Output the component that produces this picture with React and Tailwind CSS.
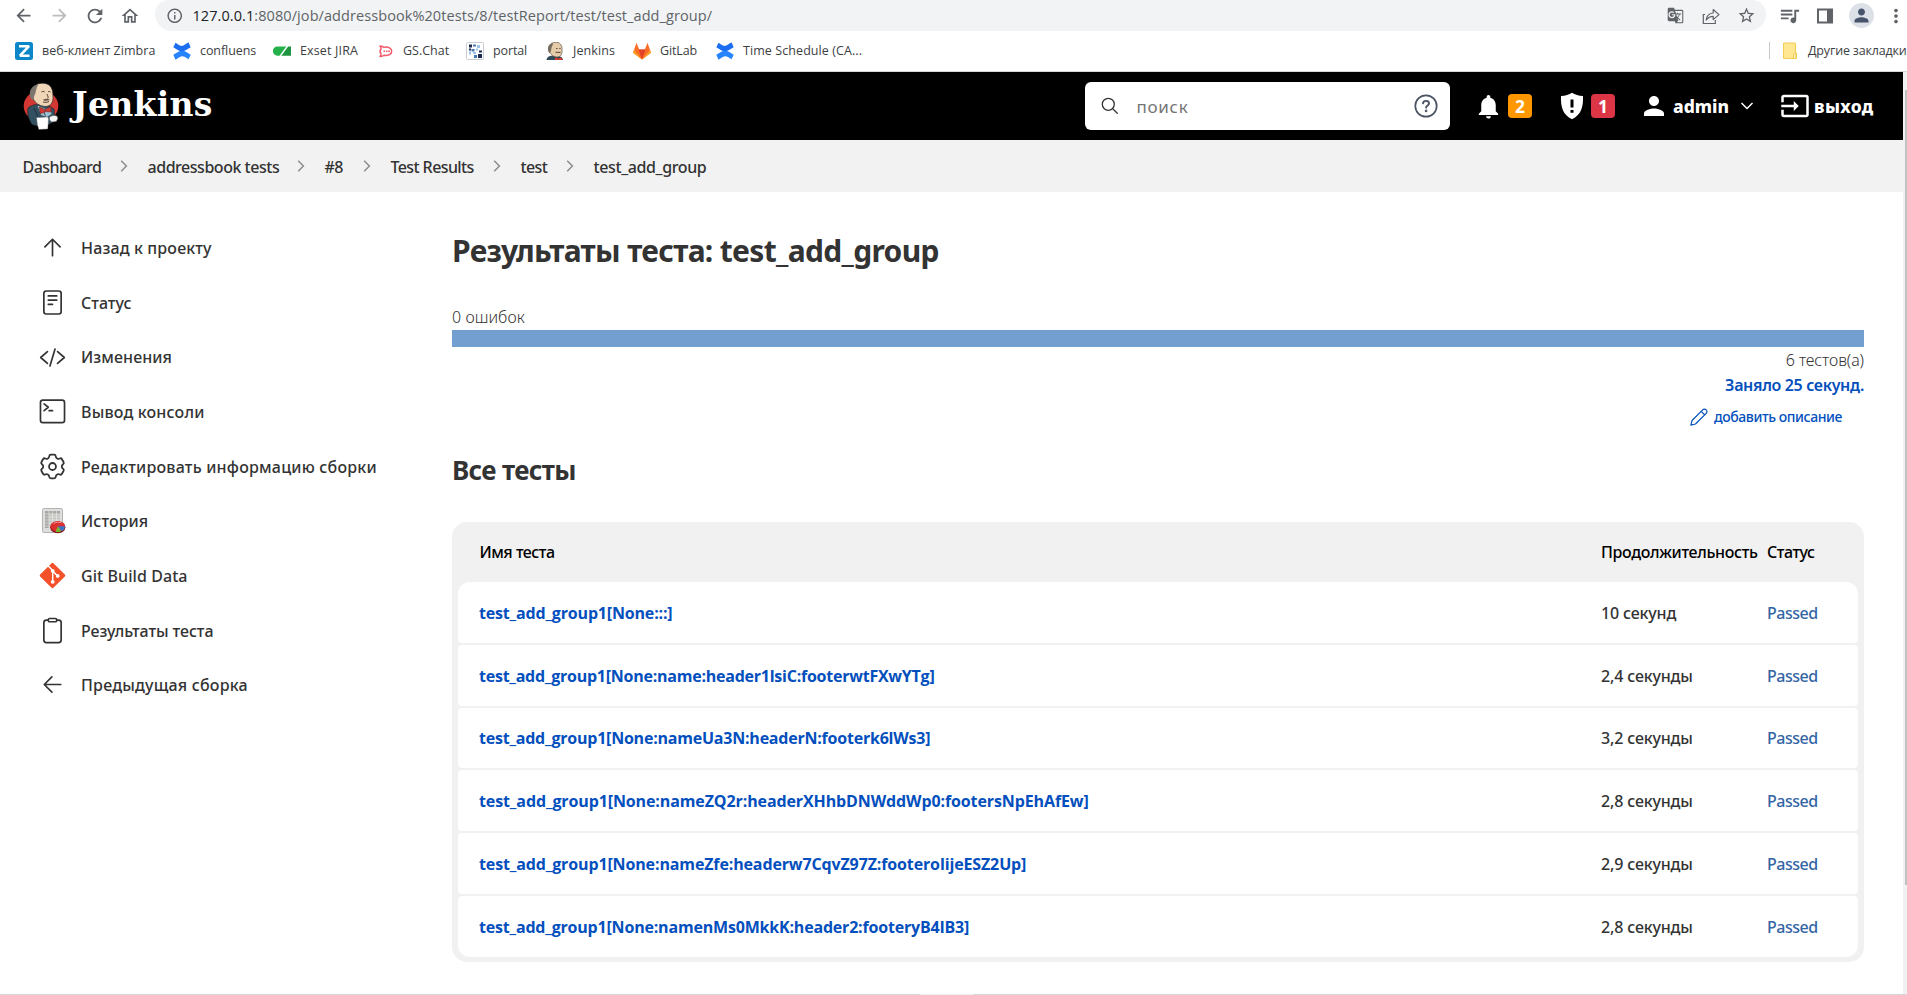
import React from "react";
import {
  MdArrowBack, MdArrowForward, MdRefresh, MdOutlineHome, MdInfoOutline, MdGTranslate,
  MdStarBorder, MdQueueMusic, MdPerson, MdMoreVert, MdNotifications, MdInput,
} from "react-icons/md";

/* ---------- icons ---------- */

function Line({ children, className = "size-[27px]", w = 32 }) {
  return (
    <svg viewBox="0 0 512 512" className={className} fill="none" stroke="currentColor" strokeWidth={w} strokeLinecap="round" strokeLinejoin="round">
      {children}
    </svg>
  );
}

const ArrowUp = () => <Line><path d="M112 244 256 100l144 144M256 120v292" /></Line>;
const ArrowLeft = () => <Line><path d="M244 400 100 256l144-144M120 256h292" /></Line>;
const Reader = () => (
  <Line><rect x="92" y="38" width="328" height="436" rx="46" /><path d="M176 132h160M176 210h160M176 290h80" /></Line>
);
const Code = () => <Line><path d="M160 368 32 256l128-112M352 368l128-112-128-112M304 96l-96 320" /></Line>;
const Terminal = () => (
  <Line><rect x="28" y="40" width="456" height="428" rx="46" /><path d="m96 112 80 64-80 64M192 240h64" /></Line>
);
const Clipboard = () => (
  <Line>
    <path d="M336 58h36a48 48 0 0 1 48 48v332a48 48 0 0 1-48 48H140a48 48 0 0 1-48-48V106a48 48 0 0 1 48-48h36" />
    <rect x="176" y="28" width="160" height="62" rx="26" />
  </Line>
);

const gearPath = (() => {
  const pts = [];
  for (let k = 0; k < 6; k++) {
    for (const [a, r] of [[-21, 178], [-15, 232], [15, 232], [21, 178]]) {
      const t = ((k * 60 + a - 90) * Math.PI) / 180;
      pts.push([256 + r * Math.cos(t), 256 + r * Math.sin(t)]);
    }
  }
  const near = (p, q, d) => {
    const l = Math.hypot(q[0] - p[0], q[1] - p[1]);
    const f = Math.min(0.5, d / l);
    return [p[0] + (q[0] - p[0]) * f, p[1] + (q[1] - p[1]) * f];
  };
  let d = "";
  pts.forEach((p, i) => {
    const prev = pts[(i + pts.length - 1) % pts.length];
    const next = pts[(i + 1) % pts.length];
    const a = near(p, prev, 30);
    const b = near(p, next, 30);
    d += `${i ? "L" : "M"}${a[0]} ${a[1]}Q${p[0]} ${p[1]} ${b[0]} ${b[1]}`;
  });
  return d + "Z";
})();
const Gear = () => <Line w={34}><path d={gearPath} /><circle cx="256" cy="256" r="66" /></Line>;

const History = () => (
  <svg viewBox="0 0 27 27" className="size-[27px]">
    <rect x="3.5" y="1.5" width="20" height="24" rx="1.2" fill="#dededc" stroke="#b4b4b2" />
    <rect x="6" y="4" width="15" height="17" fill="#c6c6c4" />
    <path d="M6 4h15v3H6zM6 4h4v17H6z" fill="#a9a9a7" />
    <path d="M6 7h15M6 10h15M6 13h15M6 16h15M6 19h15M10 4v17M13.500 4v17M17.500 4v17" stroke="#ececea" strokeWidth=".6" />
    <ellipse cx="18.800" cy="20.300" rx="7.600" ry="5.900" fill="#8e1616" />
    <ellipse cx="18.800" cy="19.300" rx="7.300" ry="5.300" fill="#dc2f2f" />
    <path d="M14.500 16.700c2-1.700 5-2 8-.8" stroke="#f59a9a" strokeWidth="1" fill="none" />
    <path d="M18.800 19.300h7.200c0 2.500-1.500 4.200-3.600 5z" fill="#3f73c4" />
    <path d="m18.800 19.300 3.400 5c-1.800.9-3.800 1-5.600.5z" fill="#6fc030" />
  </svg>
);

const Git = () => (
  <svg viewBox="0 0 27 27" className="size-[27px]">
    <rect x="4.100" y="4.100" width="18.800" height="18.800" rx="1.300" transform="rotate(45 13.500 13.500)" fill="#f4502a" />
    <path d="M9.300 4 13.700 8.600V20M13.700 9l4.800 4.900" stroke="#fff" strokeWidth="1.500" fill="none" />
    <circle cx="13.700" cy="8.800" r="1.900" fill="#fff" />
    <circle cx="13.700" cy="19.800" r="1.900" fill="#fff" />
    <circle cx="18.700" cy="13.900" r="1.900" fill="#fff" />
  </svg>
);

const Pencil = () => (
  <svg viewBox="0 0 18 18" className="size-[18px]" fill="none" stroke="currentColor" strokeWidth="1.200" strokeLinejoin="round">
    <path d="M.9 17.100 2 12.500 12.700 1.800a2.400 2.400 0 0 1 3.500 3.500L5.500 16z" />
    <path d="m11.200 3.300 3.500 3.500" />
  </svg>
);

const Chevron = () => (
  <svg viewBox="0 0 8 12" className="h-3 w-2" fill="none" stroke="#8c8c8c" strokeWidth="1.500">
    <path d="m1.200.8 5.200 5.200-5.200 5.200" />
  </svg>
);

const Butler = () => (
  <svg viewBox="0 0 36 48" className="h-12 w-9">
    <ellipse cx="18" cy="24" rx="17.300" ry="15.500" fill="#d33833" />
    <path d="M5 26c2-2 5-3 8-3.500l13 1.500 5 3 .5 6-1.500 7-4 2.500-12 1.500-5-1.500C6 38 4 32 5 26z" fill="#335061" stroke="#14202a" strokeWidth=".6" />
    <path d="M8.500 11C9 4.500 13.500 1.200 19.500 1.200c6.500 0 10 4 10.300 10 .2 4 .7 6.500-1 9.800-1.500 2.600-4 3.700-7.300 3.400-5-.5-9-3-11-7-1-2-2-3.400-2-6.400z" fill="#f0d6b7" stroke="#2a2a2a" strokeWidth=".7" />
    <path d="M15 3C11 2.500 8 6 7.200 9c-.8 3-.6 5 .6 7.500l2.200 1.700c1.500-1.500.6-3.700 1.600-5.200 1.500-2 1-6 3.400-10z" fill="#7d766f" />
    <path d="M18.500 10c1-.8 2.200-.8 3.200 0M25 9.800c1-.5 2-.4 2.500.2M24 12c.5 2 2 3.500.5 4.500M20 20c2 .6 4 .5 6-.5" stroke="#3a2d25" strokeWidth=".9" fill="none" />
    <path d="m20 17.500 3-.8 4 .6-1.500 1.300-4 .3z" fill="#6e5b4e" />
    <path d="m14.500 23.500 8 3.500 5-2 1 7-4.500 3-6-2z" fill="#9fc0d0" />
    <path d="m16.500 25 5 2.500.3 3-4.800 1zM22 27.500l5.500-2.700.8 5.200-6.100-.5z" fill="#d33833" stroke="#5d1414" strokeWidth=".5" />
    <path d="m21.500 31 .8 3M11 26l4 9" stroke="#14202a" strokeWidth=".7" />
    <path d="M13.500 35.500 25 35l.5 2-.7 10-9 .5-1.500-5z" fill="#fff" stroke="#555" strokeWidth=".4" />
    <path d="M26.500 35c1.500-1.500 5.500-2 7.500-1l.8 2.500-1.500 3-4.500.5-2.300-2z" fill="#f4f4f4" stroke="#555" strokeWidth=".5" />
  </svg>
);

/* ---------- bookmark icons ---------- */

const Zimbra = () => (
  <svg viewBox="0 0 18 18" className="size-[18px]">
    <rect width="18" height="18" rx="2.500" fill="#0b87c9" />
    <path d="M4 4.200h10L5 13.700h9.500" stroke="#fff" strokeWidth="2.500" fill="none" strokeLinejoin="bevel" />
  </svg>
);
const Confluence = () => (
  <svg viewBox="0 0 18 18" className="size-[18px]">
    <path d="M2.500.8 6 3c2 1.300 3.700 1 5.200 0L15.500.3l2.200 5-4.600 2.700c-3 1.700-5.800 1.600-8.400 0L.3 5.300z" fill="#1d6df0" />
    <path d="m15.500 17.200-3.500-2.200c-2-1.300-3.700-1-5.200 0l-4.300 2.700-2.200-5 4.600-2.700c3-1.700 5.800-1.600 8.400 0l4.400 2.700z" fill="#2684ff" />
  </svg>
);
const Exset = () => (
  <svg viewBox="0 0 18 18" className="size-[18px]">
    <path d="M4.500 4.500h8.800L6.500 13.700h-2A4.600 4.600 0 0 1 4.500 4.500z" fill="#24b14a" />
    <path d="M15.200 4.500H18v9.200H8.300z" fill="#1e9440" />
  </svg>
);
const Chat = () => (
  <svg viewBox="0 0 18 18" className="size-[18px]" fill="none" stroke="#f5596c" strokeWidth="1.500" strokeLinejoin="round">
    <path d="M4 4c1.500 0 2.800.6 3.600 1.300C12.500 4.300 15.700 6.300 15.700 9.300s-3.500 4.700-7.700 4c-1 .9-2.400 1.300-4 1.200 1-1 1.200-1.900 1-2.800-1.300-1.500-1.300-3.100 0-4.600.2-1.200 0-2.100-1-3.100z" />
    <path d="M7.500 9.300H14" strokeDasharray="1.600 .8" />
  </svg>
);
const Portal = () => (
  <svg viewBox="0 0 18 18" className="size-[18px]">
    <rect x=".5" y=".5" width="17" height="17" rx="1" fill="#fff" stroke="#c9ccd0" />
    <path d="M3 2.500h3v3H3zM3 6.500h2v2H3zM12 12h4v4h-4zM13 8.500h3v2h-3z" fill="#1b2a50" />
    <path d="M7 2.500h3v2H7zM5.500 7h3v2.500h-3zM8 13h3v3H8z" fill="#4a78b5" />
    <path d="M11 3h3v3h-3zM7 10h3v2H7zM3 9.500h2v3H3zM10 6.500h2v2h-2z" fill="#9cc4ea" />
  </svg>
);
const Face = () => (
  <svg viewBox="0 0 18 18" className="size-[18px]">
    <path d="M.5 18c.3-2.500 2-4 4.500-4.300l7 .3c3 .2 4.700 1.700 5 4z" fill="#2f4a58" />
    <path d="M3 5C4 1.800 6.500.3 9.800.3c4 0 6 2.500 6.200 6 .2 3.500.2 5.500-1.500 7.500-1.500 1.500-5 1.800-7.300.2C4 12 2.300 9 3 5z" fill="#e6cba8" stroke="#4b4038" strokeWidth=".6" />
    <path d="M7 1C3.500 1.500 1.800 4 2 7.500c.2 1.800.8 3 1.800 3.800C5.500 9.500 5 6 6 4.500 6.500 3.500 7 2.500 7 1z" fill="#776c62" />
    <path d="m9.500 10.200 5 .3M10 6.500h1.500M13.300 6.500h1.200" stroke="#54463b" strokeWidth="1.100" />
    <path d="m9 15.500 3.500 1L16 15.500V18H9z" fill="#d33833" />
  </svg>
);
const GitLab = () => (
  <svg viewBox="0 0 18 18" className="size-[18px]">
    <path d="M9 17.500 0 10.800 3.500.8l2.700 6.700h5.600L14.500.8l3.500 10z" fill="#fc6d26" />
    <path d="M9 17.500 5.500 7.500h7z" fill="#e24329" />
    <path d="m9 17.500-9-6.700 1-2.900zM9 17.500l9-6.700-1-2.900z" fill="#fca326" />
  </svg>
);

/* ---------- data ---------- */

const bookmarks = [
  { icon: Zimbra, text: "веб-клиент Zimbra", cls: "w-[158px] tracking-[0.03px]" },
  { icon: Confluence, text: "confluens", cls: "w-[100px] tracking-[-0.08px]" },
  { icon: Exset, text: "Exset JIRA", cls: "w-[103px] tracking-[0.14px]" },
  { icon: Chat, text: "GS.Chat", cls: "w-[90px]" },
  { icon: Portal, text: "portal", cls: "w-20 tracking-[-0.12px]" },
  { icon: Face, text: "Jenkins", cls: "w-[87px] tracking-[0.09px]" },
  { icon: GitLab, text: "GitLab", cls: "w-[83px] tracking-[-0.12px]" },
  { icon: Confluence, text: "Time Schedule (CA...", cls: "tracking-[0.08px]" },
];

const crumbs = [
  { text: "Dashboard", cls: "w-[125px] tracking-[-0.56px]" },
  { text: "addressbook tests", cls: "w-[177px] tracking-[-0.47px]" },
  { text: "#8", cls: "w-[66px] tracking-[-0.7px]" },
  { text: "Test Results", cls: "w-[130px] tracking-[-0.6px]" },
  { text: "test", cls: "w-[73px] tracking-[-0.6px]" },
  { text: "test_add_group", cls: "tracking-[-0.38px]" },
];

const tasks = [
  { icon: ArrowUp, text: "Назад к проекту", cls: "tracking-[0.14px]" },
  { icon: Reader, text: "Статус", cls: "tracking-[0px]" },
  { icon: Code, text: "Изменения", cls: "tracking-[0.08px]" },
  { icon: Terminal, text: "Вывод консоли", cls: "tracking-[0.18px]" },
  { icon: Gear, text: "Редактировать информацию сборки", cls: "tracking-[0.2px]" },
  { icon: History, text: "История", cls: "tracking-[0.06px]" },
  { icon: Git, text: "Git Build Data", cls: "tracking-[0.07px]" },
  { icon: Clipboard, text: "Результаты теста", cls: "tracking-[-0.08px]" },
  { icon: ArrowLeft, text: "Предыдущая сборка", cls: "tracking-[0.2px]" },
];

const rows = [
  { name: "test_add_group1[None:::]", time: "10 секунд", cls: "tracking-[-0.17px]", round: "rounded-t-xl rounded-b" },
  { name: "test_add_group1[None:name:header1lsiC:footerwtFXwYTg]", time: "2,4 секунды", cls: "tracking-[-0.24px]", round: "rounded" },
  { name: "test_add_group1[None:nameUa3N:headerN:footerk6lWs3]", time: "3,2 секунды", cls: "tracking-[-0.22px]", round: "rounded" },
  { name: "test_add_group1[None:nameZQ2r:headerXHhbDNWddWp0:footersNpEhAfEw]", time: "2,8 секунды", cls: "tracking-[-0.11px]", round: "rounded" },
  { name: "test_add_group1[None:nameZfe:headerw7CqvZ97Z:footerolijeESZ2Up]", time: "2,9 секунды", cls: "tracking-[-0.13px]", round: "rounded" },
  { name: "test_add_group1[None:namenMs0MkkK:header2:footeryB4IB3]", time: "2,8 секунды", cls: "tracking-[-0.19px]", round: "rounded-b-xl rounded-t" },
];

/* ---------- sections ---------- */

function BrowserBar() {
  return (
    <div className="flex h-[31px] items-center text-[#5f6368]">
      <div className="flex w-[155px] items-center pl-[6px]">
        <span className="flex w-[35.500px] justify-center"><MdArrowBack size={21} /></span>
        <span className="flex w-[35.500px] justify-center text-[#babcbe]"><MdArrowForward size={21} /></span>
        <span className="flex w-[35.500px] justify-center"><MdRefresh size={22} /></span>
        <span className="flex w-[35.500px] justify-center"><MdOutlineHome size={20} /></span>
      </div>
      <div className="flex h-[31px] w-[1611px] items-center rounded-tl-[14px] rounded-tr-[14px] rounded-br-[17px] rounded-bl-[17px] bg-[#f1f3f4] pl-[11px]">
        <MdInfoOutline size={17.500} />
        <span className="ml-[9px] text-[14.500px] tracking-[0.075px] whitespace-nowrap">
          <span className="text-[#202124]">127.0.0.1</span>:8080/job/addressbook%20tests/8/testReport/test/test_add_group/
        </span>
        <div className="ml-auto flex items-center">
          <span className="flex w-[35.500px] justify-center"><MdGTranslate size={17} /></span>
          <span className="flex w-[35.500px] justify-center">
            <svg viewBox="0 0 18 18" className="size-[18px]" fill="none" stroke="currentColor" strokeWidth="1.200">
              <path d="M3 7.500H1.300v9h12v-3.500" />
              <path d="M4.200 13c.4-4 2.800-6.600 7-7V2.500L17 7.600l-5.800 5V9.300c-3 0-5.200 1.200-7 3.700z" strokeLinejoin="round" />
            </svg>
          </span>
          <span className="flex w-[35.500px] justify-center"><MdStarBorder size={19} /></span>
          <span className="w-[2px]" />
        </div>
      </div>
      <div className="flex items-center pl-[5px]">
        <span className="flex w-[36px] justify-center"><MdQueueMusic size={23} /></span>
        <span className="flex w-[36px] justify-center">
          <svg viewBox="0 0 16 16" className="size-4">
            <path d="M0 .5h16v15H0zM2 2.500v11h8v-11z" fillRule="evenodd" fill="currentColor" />
          </svg>
        </span>
        <span className="flex w-[36px] justify-center">
          <span className="flex size-[25px] items-center justify-center rounded-full bg-[#dce0e7] text-[#46536b]"><MdPerson size={21} /></span>
        </span>
        <span className="flex w-[28px] justify-end"><MdMoreVert size={22} /></span>
      </div>
    </div>
  );
}

function Bookmarks() {
  return (
    <div className="flex h-[41px] items-center border-b border-[#d5d7da] pb-px pl-[15px] text-[12.500px] text-[#3c4043]">
      {bookmarks.map(({ icon: Icon, text, cls }, i) => (
        <div key={i} className={"flex items-center whitespace-nowrap " + cls}>
          <span className="w-[27px]"><Icon /></span>
          <span className="pt-[1.500px]">{text}</span>
        </div>
      ))}
      <div className="ml-auto flex w-[138px] items-center whitespace-nowrap">
        <span className="mr-[13px] h-[17px] w-px shrink-0 bg-[#c6c8cb]" />
        <svg viewBox="0 0 14 17" className="h-[17px] w-3.5 shrink-0">
          <path d="M.5 1h12v10h1v5.500H.5z" fill="#ffe791" stroke="#f3ce55" />
          <path d="M10.500 16v-3.500c0-1.500 2.500-1.500 2.500 0V16" fill="#fff2bd" stroke="#e9bf3e" strokeWidth=".8" />
        </svg>
        <span className="ml-[11px] pt-[1.500px] tracking-[-0.18px]">Другие закладки</span>
      </div>
    </div>
  );
}

function Header() {
  return (
    <header className="flex h-[68px] items-center bg-black font-['Noto_Sans'] text-[17.500px] font-bold text-white">
      <div className="flex w-[1085px] items-center pl-[23px]">
        <Butler />
        <span className="ml-[13px] pb-[3px] font-['DejaVu_Serif'] text-[33px] leading-[40px] tracking-[0.3px]">Jenkins</span>
      </div>
      <div className="flex h-12 w-[365px] items-center rounded-md bg-white pr-[12.500px] pl-4 font-normal">
        <svg viewBox="0 0 18 18" className="size-[18px]" fill="none" stroke="#333" strokeWidth="1.300" strokeLinecap="round">
          <circle cx="7.300" cy="7.300" r="6" /><path d="m12 12 4.300 4.300" />
        </svg>
        <span className="ml-[17.500px] pt-[2px] text-[17px] tracking-[0.7px] text-[#757575]">поиск</span>
        <svg viewBox="0 0 24 24" className="ml-auto size-6" fill="none" stroke="#4b5362" strokeWidth="1.700" strokeLinecap="round">
          <circle cx="12" cy="12" r="10.700" />
          <path d="M9 9.400c.2-1.600 1.300-2.500 3-2.500s3 1 3 2.500c0 2-2.700 2.200-2.900 4.200" strokeWidth="1.900" />
          <circle cx="12.100" cy="16.900" r=".5" />
        </svg>
      </div>
      <div className="flex items-center pl-[24px]">
        <MdNotifications size={29} />
        <span className="ml-[5px] flex size-6 items-center justify-center rounded bg-[#ff9800] pt-px">2</span>
        <svg viewBox="0 0 24 28" className="ml-[28px] h-7 w-6">
          <path d="M12 .8c3 2 6.500 3 11 3.300.5 11-2 19-11 23.100C3 23.100.5 15.100 1 4.100 5.500 3.800 9 2.800 12 .8z" fill="#fff" />
          <path d="M12 7.500v8M12 18v2.800" stroke="#000" strokeWidth="3" />
        </svg>
        <span className="ml-[7px] flex size-6 items-center justify-center rounded bg-[#dc3545] pt-px">1</span>
        <MdPerson size={30} className="ml-[24px]" />
        <span className="ml-[4px] w-[67px] pt-px font-extrabold">admin</span>
        <svg viewBox="0 0 14 8" className="h-2 w-3.5" fill="none" stroke="#fff" strokeWidth="1.500"><path d="m1.500 1 5.500 5.500L12.500 1" /></svg>
        <MdInput size={30} className="ml-[26px]" />
        <span className="ml-[4px] pt-px font-extrabold tracking-[0.3px]">выход</span>
      </div>
    </header>
  );
}

export default function App() {
  return (
    <div className="flex h-[995px] w-[1907px] flex-col overflow-hidden bg-white font-['Open_Sans','Noto_Sans',sans-serif] text-base">
      <BrowserBar />
      <Bookmarks />
      <div className="flex h-[922px]">
        <div className="w-[1903px] font-['Noto_Sans',sans-serif] text-[#333]">
          <Header />
          <nav className="flex h-[52px] items-center bg-[#f2f2f2] pl-[22.500px] font-[460]">
            {crumbs.map(({ text, cls }, i) => (
              <div key={text} className={"flex items-center whitespace-nowrap " + cls}>
                <span className="pt-[1.500px]">{text}</span>
                {i < crumbs.length - 1 && <span className="mr-5 ml-auto pb-px"><Chevron /></span>}
              </div>
            ))}
          </nav>
          <div className="flex">
            <aside className="w-[452px] pt-[28.500px] pl-[38.500px] font-[460]">
              {tasks.map(({ icon: Icon, text, cls }) => (
                <a key={text} className="flex h-[54.625px] items-center gap-[15.500px]">
                  <Icon />
                  <span className={"pt-[0.800px] " + cls}>{text}</span>
                </a>
              ))}
            </aside>
            <main className="w-[1412px]">
              <h1 className="mt-[29px] text-[30px] leading-[60px] font-bold tracking-[-0.68px]">Результаты теста: test_add_group</h1>
              <p className="mt-[23px] leading-[26px] font-[350] tracking-[0.05px]">0 ошибок</p>
              <div className="h-[17px] bg-[#729fcf]" />
              <p className="pt-px text-right leading-[25px] font-[350] tracking-[-0.08px]">6 тестов(а)</p>
              <p className="text-right leading-[25px] font-semibold tracking-[-0.35px] text-[#034fbd]">Заняло 25 секунд.</p>
              <a className="flex h-[38px] items-center justify-end gap-[6px] pr-[22px] text-sm font-medium tracking-[-0.42px] text-[#034fbd]">
                <Pencil />
                <span>добавить описание</span>
              </a>
              <h2 className="pt-px text-[26px] leading-[66px] font-bold tracking-[-0.65px]">Все тесты</h2>
              <section className="mt-[19px] rounded-[15px] bg-[#f1f1f1] px-1.5 pb-[5px]">
                <div className="flex h-[60px] items-center pl-[21.500px] font-[460] text-black">
                  <span className="w-[1121.500px] tracking-[-0.5px]">Имя теста</span>
                  <span className="w-[166px] tracking-[-0.34px]">Продолжительность</span>
                  <span className="tracking-[-0.46px]">Статус</span>
                </div>
                <div className="flex flex-col gap-[2px]">
                  {rows.map(({ name, time, cls, round }) => (
                    <div key={name} className={"flex h-[60.750px] items-center bg-white pt-[0.800px] pl-[21px] font-[460] " + round}>
                      <span className={"w-[1122px] font-['Open_Sans'] font-bold text-[#034fbd] " + cls}>{name}</span>
                      <span className="w-[166px] tracking-[-0.16px]">{time}</span>
                      <span className="tracking-[-0.5px] text-[#3465a4]">Passed</span>
                    </div>
                  ))}
                </div>
              </section>
            </main>
          </div>
        </div>
        <div className="w-1 bg-[#f1f1f1] pt-[18px] pl-0.5">
          <div className="h-[795px] bg-[#c1c1c1]" />
        </div>
      </div>
      <div className="flex h-px bg-[#d6d6d6] pl-[920px]">
        <div className="w-[53px] bg-[#f0f0f0]" />
      </div>
    </div>
  );
}
